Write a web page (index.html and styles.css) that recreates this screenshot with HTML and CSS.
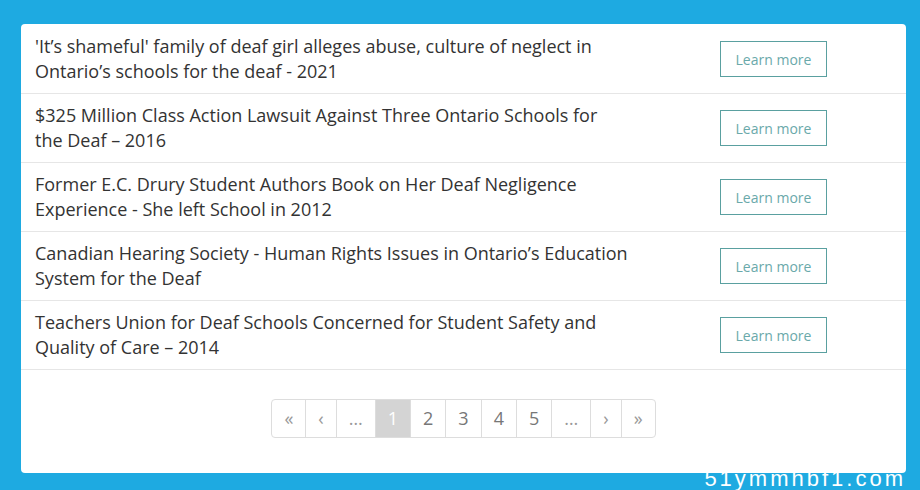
FILE: index.html
```html
<!DOCTYPE html>
<html lang="en">
<head>
    <meta charset="UTF-8">
    <meta name="viewport" content="width=device-width, initial-scale=1.0">
    <title>Deaf Schools News</title>
    <link rel="stylesheet" href="styles.css">
</head>
<body>

    <!-- News list -->
    <div class="card">
        <div class="news-row">
            <div class="news-title">'It’s shameful' family of deaf girl alleges abuse, culture of neglect in Ontario’s schools for the deaf - 2021</div>
            <a class="learn-more" href="#">Learn more</a>
        </div>
        <div class="news-row">
            <div class="news-title">$325 Million Class Action Lawsuit Against Three Ontario Schools for the Deaf – 2016</div>
            <a class="learn-more" href="#">Learn more</a>
        </div>
        <div class="news-row">
            <div class="news-title">Former E.C. Drury Student Authors Book on Her Deaf Negligence Experience - She left School in 2012</div>
            <a class="learn-more" href="#">Learn more</a>
        </div>
        <div class="news-row">
            <div class="news-title">Canadian Hearing Society - Human Rights Issues in Ontario’s Education System for the Deaf</div>
            <a class="learn-more" href="#">Learn more</a>
        </div>
        <div class="news-row">
            <div class="news-title">Teachers Union for Deaf Schools Concerned for Student Safety and Quality of Care – 2014</div>
            <a class="learn-more" href="#">Learn more</a>
        </div>

        <!-- Pagination -->
        <div class="pager-wrap">
            <ul class="pager">
                <li class="arrow">«</li>
                <li class="arrow">‹</li>
                <li class="dots">…</li>
                <li class="active">1</li>
                <li>2</li>
                <li>3</li>
                <li>4</li>
                <li>5</li>
                <li class="dots">…</li>
                <li class="arrow">›</li>
                <li class="arrow">»</li>
            </ul>
        </div>
    </div>

    <div class="watermark">51ymmhbf1.com</div>

</body>
</html>
```

FILE: styles.css
```css
/* General */
body {
    margin: 0;
    padding: 24px 14px 17px 21px;
    background-color: #1eaae1;
    font-family: "Open Sans", sans-serif;
    color: #333;
    height: 490px;
    box-sizing: border-box;
    overflow: hidden;
    position: relative;
}
.card {
    background-color: #fff;
    border-radius: 4px;
    height: 100%;
    box-sizing: border-box;
    padding-top: 1px;
    position: relative;
    z-index: 1;
}
/* Rows */
.news-row {
    display: flex;
    align-items: center;
    height: 69px;
    box-sizing: border-box;
    padding: 0 14px;
    border-bottom: 1px solid #e6e6e6;
}
.news-title {
    width: 593px;
    font-size: 18px;
    line-height: 25px;
    color: #333;
}
.learn-more {
    margin-left: 92px;
    width: 107px;
    height: 36px;
    box-sizing: border-box;
    border: 1px solid #5aa0a0;
    color: #6aa9aa;
    font-size: 14px;
    text-decoration: none;
    display: flex;
    align-items: center;
    justify-content: center;
}
/* Pagination */
.pager-wrap {
    display: flex;
    justify-content: center;
    padding-top: 29px;
}
.pager {
    display: flex;
    list-style: none;
    margin: 0;
    padding: 0;
    border: 1px solid #ddd;
    border-radius: 4px;
}
.pager li {
    padding: 6px 12px;
    font-size: 18px;
    line-height: 25px;
    color: #777;
    border-left: 1px solid #ddd;
    text-align: center;
}
.pager li:first-child {
    border-left: none;
}
.pager .arrow,
.pager .dots {
    color: #999;
}
.pager .active {
    background-color: #d4d4d4;
    color: #fff;
}
.watermark {
    position: absolute;
    right: 14px;
    bottom: -2px;
    color: #fff;
    font-family: "Liberation Sans", sans-serif;
    font-size: 22px;
    letter-spacing: 3px;
}
```
